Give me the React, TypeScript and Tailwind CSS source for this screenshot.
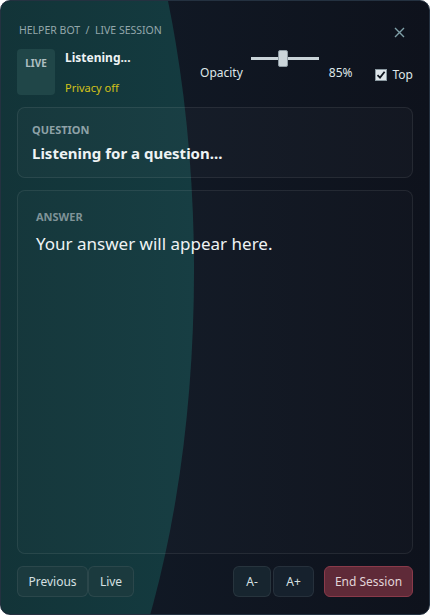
import React from 'react';

const font = { fontFamily: '"Noto Sans", "Open Sans", sans-serif' };

function Btn({ children, className = '' }: { children: React.ReactNode; className?: string }) {
  return (
    <button
      className={`h-[31px] rounded-md border text-[12px] leading-none ${className}`}
    >
      {children}
    </button>
  );
}

export default function App() {
  return (
    <div
      className="relative w-[430px] h-[615px] overflow-hidden rounded-[10px] border border-[#243140] bg-gradient-to-r from-[#121c29] to-[#0e121c] text-[#e3ecee]"
      style={font}
    >
      {/* teal glow on the left */}
      <div className="pointer-events-none absolute left-[-293px] top-[-330px] w-[486px] h-[1200px] rounded-[50%] bg-gradient-to-r from-[#0f2a2e] via-[#123236] to-[#143b40]" />

      <div className="relative flex h-full flex-col px-[16px] pt-[22px] pb-[17px]">
        {/* header */}
        <div className="flex items-center justify-between">
          <span className="pl-[2px] text-[10.5px] text-[#93a7ab]">HELPER BOT&nbsp; /&nbsp; LIVE SESSION</span>
          <button className="mr-[8px] mt-[4px] text-[#7fa0a8]">
            <svg width="11" height="11" viewBox="0 0 11 11" fill="none" stroke="currentColor" strokeWidth="1.4">
              <path d="M1 1L10 10M10 1L1 10" />
            </svg>
          </button>
        </div>

        {/* status row */}
        <div className="mt-[10px] flex items-start">
          <div className="flex h-[46px] w-[38px] justify-center rounded-[4px] bg-[#204648] pt-[7px] text-[10px] font-bold text-[#aebfc1]">
            LIVE
          </div>
          <div className="ml-[10px] flex h-[46px] flex-col">
            <span className="text-[12px] font-bold text-[#eef3f4]">Listening...</span>
            <span className="mt-[13px] text-[11px] text-[#d4c21a]">Privacy off</span>
          </div>
          <div className="ml-auto flex items-start">
            <span className="mt-[15px] mr-[8px] text-[12px] text-[#dfe7e9]">Opacity</span>
            <div className="relative mt-[1px] h-[17px] w-[68px]">
              <div className="absolute left-0 right-0 top-[7px] h-[3px] bg-[#c9d3d8]" />
              <div className="absolute left-[27px] top-0 h-[17px] w-[10px] rounded-[2px] border border-[#8e9ba3] bg-[#cbd5da]" />
            </div>
            <span className="mt-[15px] ml-[10px] text-[12px] text-[#dfe7e9]">85%</span>
            <div className="mt-[17px] ml-[22px] flex items-center">
              <div className="flex h-[12px] w-[12px] items-center justify-center border border-[#8a98a0] bg-[#dfe6ea]">
                <svg width="10" height="10" viewBox="0 0 10 10" fill="none" stroke="#10161f" strokeWidth="1.8">
                  <path d="M1.5 5.2L4 7.6L8.6 1.8" />
                </svg>
              </div>
              <span className="ml-[6px] text-[12px] text-[#dfe7e9]">Top</span>
            </div>
          </div>
        </div>

        {/* question */}
        <div className="mt-[12px] rounded-lg border border-[#ffffff14] bg-[#ffffff06] px-[14px] pt-[14px] pb-[12px]">
          <div className="text-[11px] font-bold text-[#8ea2a7]">QUESTION</div>
          <div className="mt-[4px] text-[15px] font-bold text-[#eef3f4]">Listening for a question...</div>
        </div>

        {/* answer */}
        <div className="mt-[12px] flex-1 rounded-lg border border-[#ffffff14] bg-[#ffffff04] px-[18px] pt-[18px]">
          <div className="text-[11px] font-bold text-[#7f9398]">ANSWER</div>
          <div className="mt-[6px] text-[17px] text-[#eef3f4]">Your answer will appear here.</div>
        </div>

        {/* footer */}
        <div className="mt-[12px] flex items-center">
          <Btn className="w-[71px] border-[#ffffff12] bg-[#1b3a3e] text-[#d6e0e2]">Previous</Btn>
          <Btn className="w-[46px] border-[#ffffff12] bg-[#1b3a3e] text-[#d6e0e2]">Live</Btn>
          <Btn className="ml-auto w-[38px] border-[#ffffff12] bg-[#17252f] text-[#d6e0e2]">A-</Btn>
          <Btn className="ml-[2px] w-[41px] border-[#ffffff12] bg-[#16212d] text-[#d6e0e2]">A+</Btn>
          <Btn className="ml-[10px] w-[89px] border-[#8a3a4a] bg-[#5f2a38] text-[#e2d5d8]">End Session</Btn>
        </div>
      </div>
    </div>
  );
}
